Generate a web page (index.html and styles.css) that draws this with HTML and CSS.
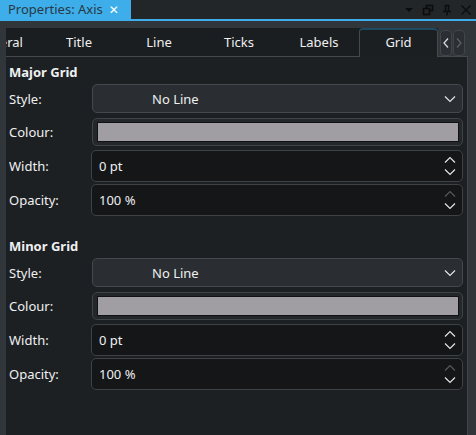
FILE: index.html
```html
<!DOCTYPE html>
<html>
<head>
<meta charset="utf-8">
<link rel="stylesheet" href="styles.css">
</head>
<body>
<div class="titlebar">
  <div class="title-tab"><span class="title-text">Properties: Axis</span><span class="title-close">✕</span></div>
  <div class="title-icons">
    <svg class="ti" width="12" height="12" viewBox="0 0 12 12"><path d="M2 4 L10 4 L6 8 Z" fill="#0b0c0d"/></svg>
    <svg class="ti" width="12" height="12" viewBox="0 0 12 12"><rect x="4.5" y="1.5" width="6" height="5" fill="none" stroke="#0b0c0d" stroke-width="1.6"/><rect x="1.5" y="4.5" width="6" height="6" fill="#232629" stroke="#0b0c0d" stroke-width="1.6"/></svg>
    <svg class="ti" width="12" height="12" viewBox="0 0 12 12"><path d="M3.5 1.5 H8.5 M4.5 1.5 V7.5 M7.5 1.5 V7.5 M2 7.5 H10 M6 7.5 V11.5" fill="none" stroke="#0b0c0d" stroke-width="1.5"/></svg>
    <svg class="ti" width="12" height="12" viewBox="0 0 12 12"><path d="M1.5 1.5 L10.5 10.5 M10.5 1.5 L1.5 10.5" stroke="#0b0c0d" stroke-width="1.3"/></svg>
  </div>
</div>
<div class="accent"></div>
<div class="dock">
  <div class="tabrow">
    <div class="tabs">
      <div class="tab first">General</div>
      <div class="tab">Title</div>
      <div class="tab">Line</div>
      <div class="tab">Ticks</div>
      <div class="tab">Labels</div>
      <div class="tab active">Grid</div>
    </div>
    <div class="scrollbtns">
      <div class="sbtn"><svg width="8" height="12" viewBox="0 0 8 12"><path d="M6 1.5 L2 6 L6 10.5" fill="none" stroke="#d6d8da" stroke-width="1.3"/></svg></div>
      <div class="sbtn"><svg width="8" height="12" viewBox="0 0 8 12"><path d="M2 1.5 L6 6 L2 10.5" fill="none" stroke="#5d6166" stroke-width="1.3"/></svg></div>
    </div>
  </div>
  <div class="panel">
    <div class="section major">
      <div class="sec-title">Major Grid</div>
      <div class="row r-combo"><span class="label">Style:</span>
        <div class="combo"><span class="combo-text">No Line</span><svg class="chev" width="12" height="8" viewBox="0 0 12 8"><path d="M1 1.5 L6 6.5 L11 1.5" fill="none" stroke="#e3e5e7" stroke-width="1.2"/></svg></div>
      </div>
      <div class="row r-colour"><span class="label">Colour:</span>
        <div class="colourbtn"><div class="swatch"></div></div>
      </div>
      <div class="row r-spin"><span class="label">Width:</span>
        <div class="spin"><span class="spin-text">0 pt</span>
          <div class="arrows"><svg width="12" height="8" viewBox="0 0 12 8"><path d="M1 6.5 L6 1.5 L11 6.5" fill="none" stroke="#e3e5e7" stroke-width="1.2"/></svg><svg width="12" height="8" viewBox="0 0 12 8"><path d="M1 1.5 L6 6.5 L11 1.5" fill="none" stroke="#e3e5e7" stroke-width="1.2"/></svg></div>
        </div>
      </div>
      <div class="row r-spin"><span class="label">Opacity:</span>
        <div class="spin"><span class="spin-text">100 %</span>
          <div class="arrows"><svg width="12" height="8" viewBox="0 0 12 8"><path d="M1 6.5 L6 1.5 L11 6.5" fill="none" stroke="#55595d" stroke-width="1.2"/></svg><svg width="12" height="8" viewBox="0 0 12 8"><path d="M1 1.5 L6 6.5 L11 1.5" fill="none" stroke="#e3e5e7" stroke-width="1.2"/></svg></div>
        </div>
      </div>
    </div>
    <div class="section minor">
      <div class="sec-title">Minor Grid</div>
      <div class="row r-combo"><span class="label">Style:</span>
        <div class="combo"><span class="combo-text">No Line</span><svg class="chev" width="12" height="8" viewBox="0 0 12 8"><path d="M1 1.5 L6 6.5 L11 1.5" fill="none" stroke="#e3e5e7" stroke-width="1.2"/></svg></div>
      </div>
      <div class="row r-colour"><span class="label">Colour:</span>
        <div class="colourbtn"><div class="swatch"></div></div>
      </div>
      <div class="row r-spin"><span class="label">Width:</span>
        <div class="spin"><span class="spin-text">0 pt</span>
          <div class="arrows"><svg width="12" height="8" viewBox="0 0 12 8"><path d="M1 6.5 L6 1.5 L11 6.5" fill="none" stroke="#e3e5e7" stroke-width="1.2"/></svg><svg width="12" height="8" viewBox="0 0 12 8"><path d="M1 1.5 L6 6.5 L11 1.5" fill="none" stroke="#e3e5e7" stroke-width="1.2"/></svg></div>
        </div>
      </div>
      <div class="row r-spin"><span class="label">Opacity:</span>
        <div class="spin"><span class="spin-text">100 %</span>
          <div class="arrows"><svg width="12" height="8" viewBox="0 0 12 8"><path d="M1 6.5 L6 1.5 L11 6.5" fill="none" stroke="#55595d" stroke-width="1.2"/></svg><svg width="12" height="8" viewBox="0 0 12 8"><path d="M1 1.5 L6 6.5 L11 1.5" fill="none" stroke="#e3e5e7" stroke-width="1.2"/></svg></div>
        </div>
      </div>
    </div>
  </div>
</div>
</body>
</html>
```
FILE: styles.css
```css
html, body {
  margin: 0;
  padding: 0;
}
body {
  width: 476px;
  height: 435px;
  overflow: hidden;
  background: #31363b;
  font-family: "Noto Sans", "DejaVu Sans", sans-serif;
  font-size: 13px;
  color: #eff0f1;
}
.titlebar {
  height: 19px;
  display: flex;
  align-items: stretch;
  background: #232629;
}
.title-tab {
  width: 131px;
  background: #3daee9;
  display: flex;
  align-items: center;
  box-sizing: border-box;
  padding-left: 8px;
}
.title-text {
  color: #2a3845;
  font-size: 13px;
  line-height: 19px;
}
.title-close {
  margin-left: 6px;
  color: #ffffff;
  font-size: 12px;
  line-height: 19px;
}
.title-icons {
  margin-left: auto;
  display: flex;
  align-items: center;
  gap: 7px;
  padding-right: 4px;
}
.ti { display: block; }
.accent {
  height: 2px;
  background: #3daee9;
}
.dock {
  padding: 7px 8px 0 6px;
  height: 414px;
  box-sizing: border-box;
  display: flex;
  flex-direction: column;
}
.tabrow {
  height: 29px;
  display: flex;
}
.tabs {
  width: 432px;
  overflow: hidden;
  display: flex;
  background: #1b1e20;
  box-shadow: inset 0 -1px 0 #45494e;
}
.tab {
  flex: 0 0 80px;
  text-align: center;
  line-height: 28px;
  color: #eff0f1;
  box-sizing: border-box;
}
.tab.first {
  margin-left: -47px;
}
.tab.active {
  flex-basis: 79px;
  background: #1c1f22;
  border: 1px solid #45494e;
  border-bottom: none;
  border-top: 2px solid #1d4b61;
  border-radius: 4px 4px 0 0;
  line-height: 25px;
}
.scrollbtns {
  flex: 1;
  display: flex;
  gap: 1px;
  padding: 2px 0 0 2px;
  background: #31363b;
  border-bottom: 1px solid #45494e;
}
.sbtn {
  width: 12px;
  height: 26px;
  box-sizing: border-box;
  border: 1px solid #42464b;
  border-radius: 4px;
  background: #2b2f33;
  display: flex;
  align-items: center;
  justify-content: center;
}
.panel {
  flex: 1;
  background: #1d2023;
  border-right: 1px solid #40454a;
  padding: 6px 4px 0 3px;
}
.sec-title {
  font-weight: bold;
  line-height: 18px;
  height: 18px;
  margin-bottom: 3px;
}
.minor {
  margin-top: 21px;
}
.minor .sec-title {
  margin-bottom: 3px;
}
.row {
  display: flex;
  align-items: center;
}
.label {
  width: 83px;
  flex: 0 0 83px;
}
.r-combo { height: 29px; margin-bottom: 5px; }
.r-colour { height: 28px; margin-bottom: 4px; }
.r-spin { height: 32px; margin-bottom: 2px; }
.combo {
  width: 372px;
  height: 29px;
  box-sizing: border-box;
  background: #2a2e32;
  border: 1px solid #44494e;
  border-radius: 5px;
  display: flex;
  align-items: center;
  padding-left: 59px;
  padding-right: 6px;
}
.combo-text { flex: 1; }
.chev { display: block; }
.colourbtn {
  width: 372px;
  height: 28px;
  box-sizing: border-box;
  background: #23272a;
  border: 1px solid #3f4449;
  border-radius: 5px;
  padding: 3px 3px 3px 4px;
}
.swatch {
  height: 100%;
  box-sizing: border-box;
  background: #a09ea3;
  border: 1px solid #101214;
}
.spin {
  margin-left: -1px;
  width: 374px;
  height: 32px;
  box-sizing: border-box;
  background: #141618;
  border: 1px solid #3e4247;
  border-radius: 5px;
  display: flex;
  align-items: center;
  padding-left: 7px;
  padding-right: 6px;
}
.spin-text { flex: 1; }
.arrows {
  display: flex;
  flex-direction: column;
  gap: 4px;
}
.arrows svg { display: block; }
```
